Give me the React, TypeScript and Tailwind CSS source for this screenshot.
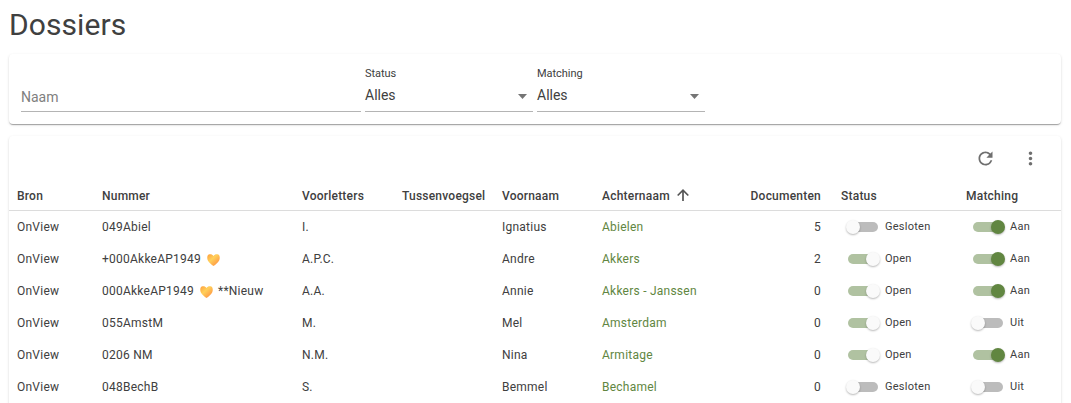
type Dossier = {
  nummer: string;
  heart?: boolean;
  suffix?: string;
  voorletters: string;
  voornaam: string;
  achternaam: string;
  documenten: number;
  open: boolean;
  matching: boolean;
};

const dossiers: Dossier[] = [
  { nummer: '049Abiel', voorletters: 'I.', voornaam: 'Ignatius', achternaam: 'Abielen', documenten: 5, open: false, matching: true },
  { nummer: '+000AkkeAP1949', heart: true, voorletters: 'A.P.C.', voornaam: 'Andre', achternaam: 'Akkers', documenten: 2, open: true, matching: true },
  { nummer: '000AkkeAP1949', heart: true, suffix: '**Nieuw', voorletters: 'A.A.', voornaam: 'Annie', achternaam: 'Akkers - Janssen', documenten: 0, open: true, matching: true },
  { nummer: '055AmstM', voorletters: 'M.', voornaam: 'Mel', achternaam: 'Amsterdam', documenten: 0, open: true, matching: false },
  { nummer: '0206 NM', voorletters: 'N.M.', voornaam: 'Nina', achternaam: 'Armitage', documenten: 0, open: true, matching: true },
  { nummer: '048BechB', voorletters: 'S.', voornaam: 'Bemmel', achternaam: 'Bechamel', documenten: 0, open: false, matching: false },
];

const columns = 'grid grid-cols-[85px_200px_100px_100px_100px_120px_99px_125px_1fr] items-center pl-2';
const card = 'rounded bg-white shadow-[0_2px_1px_-1px_rgba(0,0,0,0.2),0_1px_1px_0_rgba(0,0,0,0.14),0_1px_3px_0_rgba(0,0,0,0.12)]';

function Heart() {
  return (
    <svg width="13" height="12" viewBox="0 0 14 12" preserveAspectRatio="none" className="mt-px mr-[5px] ml-[6px] shrink-0">
      <defs>
        <linearGradient id="heart" x1="0" y1="0" x2="1" y2="1">
          <stop offset="0" stopColor="#ff9f3c" />
          <stop offset="0.4" stopColor="#ffd05a" />
          <stop offset="1" stopColor="#ff843c" />
        </linearGradient>
      </defs>
      <path d="M7 2C5.8.1 3.3-.1 1.8.6.1 1.600-.1 4.300.8 6.200 2 8.500 5 10.600 7 12c2-1.400 5-3.500 6.200-5.800.9-1.900.7-4.600-1-5.600C10.700-.1 8.200.1 7 2Z" fill="url(#heart)" />
    </svg>
  );
}

function Select({ label }: { label: string }) {
  return (
    <div className="flex h-[45px] w-[168px] flex-col border-b border-[#b4b4b4]">
      <span className="h-[17px] text-[11px] leading-[13px] tracking-[-0.05px] text-[#404040]">{label}</span>
      <div className="flex items-center justify-between pr-[6px]">
        <span className="text-sm leading-[22px] text-[#404040]">Alles</span>
        <svg width="9" height="5" viewBox="0 0 10 5" preserveAspectRatio="none" className="mt-[3px]">
          <path d="M0 0h10L5 5Z" fill="#757575" />
        </svg>
      </div>
    </div>
  );
}

function Toggle({ on, label, strong }: { on: boolean; label: string; strong?: boolean }) {
  return (
    <div className="flex items-center gap-[7px] pl-[7px]">
      <span className={`relative h-[10px] w-[30px] rounded-full ${on ? 'bg-[#b0c2a1]' : 'bg-[#bcbcbc]'}`}>
        <span
          className={`absolute -top-[2px] size-[14px] rounded-full shadow-[0_1px_2px_rgba(0,0,0,0.28)] ${on ? 'left-[18px]' : '-left-[2px]'} ${on && strong ? 'bg-[#618641]' : 'bg-[#fafafa]'}`}
        />
      </span>
      <span className="text-[11px] leading-4 tracking-[0.25px]">{label}</span>
    </div>
  );
}

export default function App() {
  return (
    <div className="h-[403px] overflow-hidden bg-white pr-[10px] pl-[9px] font-[Roboto,sans-serif] text-[#404040]">
      <h1 className="h-[54px] pt-[7px] text-[30px] leading-9 tracking-[0.08px]">Dossiers</h1>

      <section className={`${card} flex h-[70px] items-start gap-1 px-3 pt-[13px]`}>
        <div className="flex h-[45px] w-[340px] items-end border-b border-[#b4b4b4] pb-[5px] text-sm leading-[18px] text-[#808080]">Naam</div>
        <Select label="Status" />
        <Select label="Matching" />
      </section>

      <section className={`${card} mt-3 h-[300px]`}>
        <div className="flex h-[45px] items-center justify-end gap-[24px] pr-[20px] pb-px">
          <svg width="21" height="21" viewBox="0 0 24 24" fill="#6f6f6f">
            <path d="M17.650 6.350A7.958 7.958 0 0 0 12 4c-4.420 0-7.990 3.580-7.990 8s3.570 8 7.990 8c3.730 0 6.840-2.550 7.730-6h-2.080A5.990 5.990 0 0 1 12 18c-3.310 0-6-2.690-6-6s2.690-6 6-6c1.660 0 3.140.69 4.220 1.780L13 11h7V4l-2.350 2.350z" />
          </svg>
          <svg width="21" height="21" viewBox="0 0 24 24" fill="#6f6f6f">
            <path d="M12 8c1.100 0 2-.9 2-2s-.9-2-2-2-2 .9-2 2 .9 2 2 2zm0 2c-1.100 0-2 .9-2 2s.9 2 2 2 2-.9 2-2-.9-2-2-2zm0 6c-1.100 0-2 .9-2 2s.9 2 2 2 2-.9 2-2-.9-2-2-2z" />
          </svg>
        </div>
        <div className={`${columns} h-[30px] border-b border-[#dcdcdc] text-xs font-medium tracking-[0.22px]`}>
          <span>Bron</span>
          <span>Nummer</span>
          <span>Voorletters</span>
          <span>Tussenvoegsel</span>
          <span>Voornaam</span>
          <span className="flex items-center gap-[7px]">
            Achternaam
            <svg width="12" height="12" viewBox="0 0 12 12" fill="none" stroke="#555" strokeWidth="1.700" className="-mt-px">
              <path d="M6 12V1.200M.7 6.500 6 1.200l5.300 5.300" />
            </svg>
          </span>
          <span className="text-right">Documenten</span>
          <span className="pl-5">Status</span>
          <span className="pl-5">Matching</span>
        </div>
        {dossiers.map((d) => (
          <div key={d.nummer} className={`${columns} h-8 text-xs tracking-[0.24px]`}>
            <span>OnView</span>
            <span className="flex items-center">
              {d.nummer}
              {d.heart && <Heart />}
              {d.suffix}
            </span>
            <span>{d.voorletters}</span>
            <span />
            <span>{d.voornaam}</span>
            <span className="text-[#618641]">{d.achternaam}</span>
            <span className="text-right">{d.documenten}</span>
            <div className="pl-5"><Toggle on={d.open} label={d.open ? 'Open' : 'Gesloten'} /></div>
            <div className="pl-5"><Toggle on={d.matching} label={d.matching ? 'Aan' : 'Uit'} strong /></div>
          </div>
        ))}
      </section>
    </div>
  );
}
